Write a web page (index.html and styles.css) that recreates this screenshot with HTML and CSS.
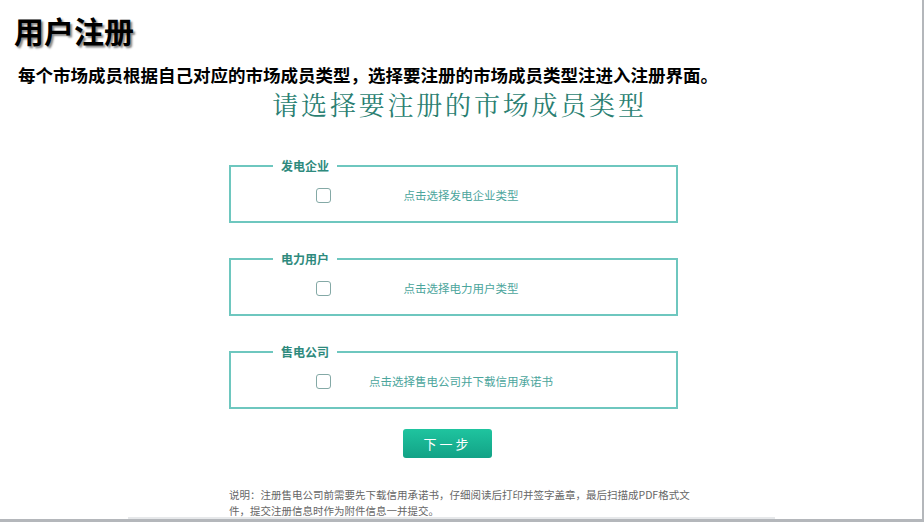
FILE: index.html
```html
<!DOCTYPE html>
<html lang="zh-CN">
<head>
    <meta charset="UTF-8">
    <meta name="viewport" content="width=device-width, initial-scale=1.0">
    <title>用户注册</title>
    <link rel="stylesheet" href="styles.css">
</head>
<body>
    <div class="page">
        <h1 class="title">用户注册</h1>
        <p class="intro">每个市场成员根据自己对应的市场成员类型，选择要注册的市场成员类型注进入注册界面。</p>

        <div class="register">
            <h2 class="heading">请选择要注册的市场成员类型</h2>

            <fieldset class="member">
                <legend>发电企业</legend>
                <label class="option">
                    <input type="checkbox" class="check">
                    <span class="option-text">点击选择发电企业类型</span>
                </label>
            </fieldset>

            <fieldset class="member">
                <legend>电力用户</legend>
                <label class="option">
                    <input type="checkbox" class="check">
                    <span class="option-text">点击选择电力用户类型</span>
                </label>
            </fieldset>

            <fieldset class="member">
                <legend>售电公司</legend>
                <label class="option">
                    <input type="checkbox" class="check">
                    <span class="option-text">点击选择售电公司并下载信用承诺书</span>
                </label>
            </fieldset>

            <div class="actions">
                <button class="next">下一步</button>
            </div>

            <p class="note">说明：注册售电公司前需要先下载信用承诺书，仔细阅读后打印并签字盖章，最后扫描成PDF格式文件，提交注册信息时作为附件信息一并提交。</p>
        </div>
        <div class="scroll-track"></div>
    </div>
</body>
</html>
```

FILE: styles.css
```css
html, body {
    margin: 0;
    height: 100%;
}

body {
    background-color: #ffffff;
    font-family: "Noto Sans CJK SC", "Liberation Sans", sans-serif;
    overflow: hidden;
}

.page {
    height: 519px;
    border-right: 2px solid #b4b7bb;
    border-bottom: 3px solid #b4b7bb;
    position: relative;
}

.title {
    margin: 0;
    padding: 9px 0 0 14px;
    font-size: 30px;
    line-height: 42px;
    font-weight: bold;
    color: #000;
    text-shadow: 2px 2px 2px #888;
}

.intro {
    margin: 12px 0 0 18px;
    font-size: 17.5px;
    line-height: 24px;
    font-weight: bold;
    color: #000;
}

.register {
    width: 449px;
    margin: 0 0 0 229px;
}

.heading {
    margin: 0 0 0 -178px;
    width: 817px;
    text-align: center;
    font-family: "Noto Serif CJK SC", "Noto Sans CJK SC", serif;
    font-size: 26px;
    font-weight: normal;
    line-height: 34px;
    letter-spacing: 2.8px;
    color: #2b7f72;
}

.member {
    margin: 0;
    padding: 0;
    height: 65px;
    border: 2px solid #6ec7bf;
    box-sizing: border-box;
}

.member + .member {
    margin-top: 28px;
}

.register .heading + .member {
    margin-top: 37px;
}

.member legend {
    margin-left: 42px;
    padding: 0 8px;
    font-size: 12px;
    line-height: 16px;
    font-weight: bold;
    color: #2e8a7d;
}

.option {
    display: flex;
    align-items: center;
    height: 42px;
    cursor: pointer;
}

.check {
    appearance: none;
    width: 15px;
    height: 15px;
    margin: 0 0 0 85px;
    border: 1.5px solid #84a9a6;
    border-radius: 3px;
    background: #fff;
    box-sizing: border-box;
}

.option-text {
    width: 260px;
    text-align: center;
    font-size: 11.5px;
    color: #4ba59c;
}

.actions {
    margin-top: 20px;
    padding-left: 174px;
}

.next {
    width: 89px;
    height: 29px;
    border: none;
    border-radius: 3px;
    background: linear-gradient(#1fc49f, #12a286);
    color: #fff;
    font-family: "Noto Sans CJK SC", sans-serif;
    font-size: 13px;
    letter-spacing: 3px;
    cursor: pointer;
}

.note {
    margin: 29px 0 0 0;
    width: 462px;
    font-size: 10.5px;
    line-height: 16px;
    color: #666;
}

.scroll-track {
    position: absolute;
    left: 128px;
    bottom: 0;
    width: 647px;
    height: 2px;
    background: #e6e8ea;
}
```
